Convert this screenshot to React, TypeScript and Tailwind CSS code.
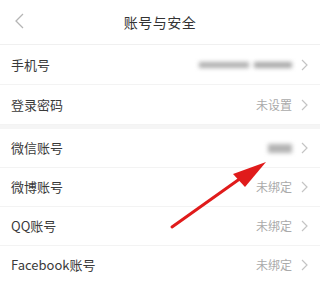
import React from 'react';

const Chevron = () => (
  <svg width="7" height="12" viewBox="0 0 7 12" className="ml-[9px] shrink-0">
    <path d="M1 1l5 5-5 5" fill="none" stroke="#c4c4c4" strokeWidth="1.2" />
  </svg>
);

function Row({ label, children, h = 'h-10' }: { label: string; children?: React.ReactNode; h?: string }) {
  return (
    <div className={`${h} flex items-center justify-between pl-[11px] pr-[12px] border-b border-[#f3f3f3]`}>
      <span className="text-[13px] text-[#3a3a3a]">{label}</span>
      <div className="flex items-center">
        {children}
        <Chevron />
      </div>
    </div>
  );
}

const Value = ({ text }: { text: string }) => <span className="text-[12px] text-[#aaaaaa]">{text}</span>;

export default function App() {
  return (
    <div
      className="relative w-[320px] h-[282px] overflow-hidden bg-white"
      style={{ fontFamily: '"Noto Sans CJK SC", "Noto Sans", sans-serif' }}
    >
      {/* header */}
      <div className="relative h-[45px] flex items-center justify-center border-b border-[#f0f0f0]">
        <svg width="12" height="16" viewBox="0 0 12 16" className="absolute left-[14px] top-[13px]">
          <path d="M9 1L2 8l7 7" fill="none" stroke="#b5b5b5" strokeWidth="1.3" />
        </svg>
        <span className="text-[14px] tracking-[0.5px] text-[#333]">账号与安全</span>
      </div>

      <Row label="手机号">
        <div className="flex items-center gap-[5px] blur-[2px]">
          <div className="w-[50px] h-[6px] bg-[#b0b0b0]" />
          <div className="w-[38px] h-[6px] bg-[#a8a8a8]" />
        </div>
      </Row>
      <Row label="登录密码">
        <Value text="未设置" />
      </Row>

      <div className="h-[4px] bg-[#f5f5f5]" />

      <Row label="微信账号" h="h-[39px]">
        <div className="w-[24px] h-[9px] bg-[#b3b3b3] blur-[2px]" />
      </Row>
      <Row label="微博账号" h="h-[39px]">
        <Value text="未绑定" />
      </Row>
      <Row label="QQ账号" h="h-[39px]">
        <Value text="未绑定" />
      </Row>
      <Row label="Facebook账号" h="h-[39px]">
        <Value text="未绑定" />
      </Row>

      {/* annotation arrow */}
      <svg width="320" height="282" className="absolute left-0 top-0 pointer-events-none">
        <line x1="172" y1="227" x2="248" y2="173" stroke="#e01b1b" strokeWidth="3" strokeLinecap="round" />
        <polygon points="266,162 233,174 245,187" fill="#e01b1b" />
      </svg>
    </div>
  );
}
